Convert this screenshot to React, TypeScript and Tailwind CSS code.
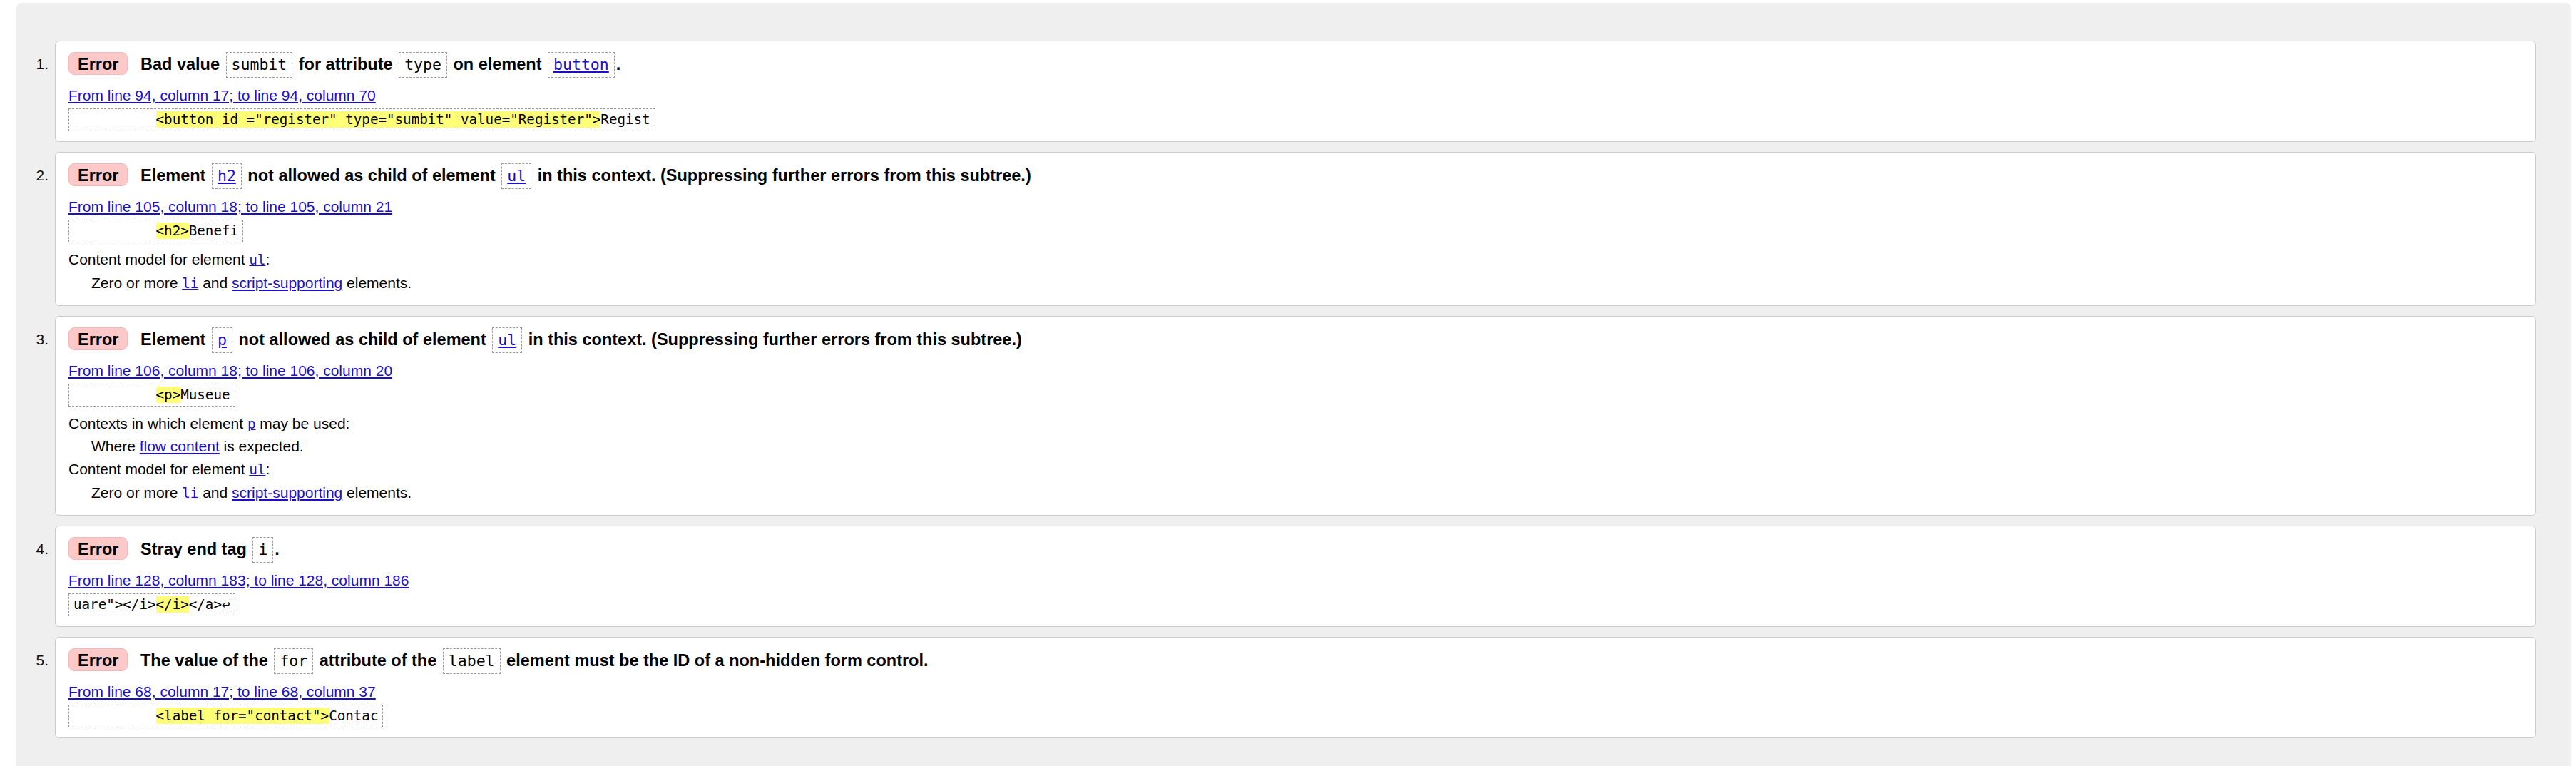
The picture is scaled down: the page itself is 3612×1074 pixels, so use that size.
import React from "react";

const MONO = "font-['DejaVu_Sans_Mono',monospace]";

function TCode({ children, link }: { children: React.ReactNode; link?: boolean }) {
  return (
    <span
      className={`inline-block border border-dashed border-[#9a9a9a] px-[7px] mx-[2px] leading-[34px] text-[21.5px] font-normal ${MONO}`}
    >
      {link ? <a className="text-[#1a0dcc] underline">{children}</a> : children}
    </span>
  );
}

function ICode({ children }: { children: React.ReactNode }) {
  return <a className={`text-[#1a0dcc] underline text-[19.2px] ${MONO}`}>{children}</a>;
}

function Lnk({ children }: { children: React.ReactNode }) {
  return <a className="text-[#1a0dcc] underline">{children}</a>;
}

function Extract({ pre, hl, post }: { pre: string; hl: string; post: React.ReactNode }) {
  return (
    <div className="mt-[5px] flex">
      <div
        className={`border border-dashed border-[#9a9a9a] px-[6px] leading-[30px] text-[19.2px] text-black whitespace-pre ${MONO}`}
      >
        {pre}
        <span className="bg-[#ffff77]">{hl}</span>
        {post}
      </div>
    </div>
  );
}

function Item({
  n,
  title,
  loc,
  extract,
  extra,
}: {
  n: number;
  title: React.ReactNode;
  loc: string;
  extract: React.ReactNode;
  extra?: React.ReactNode;
}) {
  return (
    <li className="flex items-start">
      <span className="w-[54px] shrink-0 pr-[9px] text-right mt-[17px] leading-[32px] text-[21px] text-[#111]">
        {n}.
      </span>
      <div className="flex-1 bg-white border border-[#cbcbcb] rounded-[6px] pl-[18px] pr-4 pt-[14px] pb-[14px]">
        <p className="h-[36px] leading-[36px] text-[23.5px] font-bold text-black whitespace-nowrap">
          <span className="inline-block h-[32px] leading-[32px] px-[12px] rounded-[8px] bg-[#fcc8c8] border border-[#f4baba] mr-[11px]">
            Error
          </span>{" "}
          {title}
        </p>
        <div className="mt-[12px] leading-[27px] text-[21px]">
          <Lnk>{loc}</Lnk>
        </div>
        {extract}
        {extra}
      </div>
    </li>
  );
}

function ContentModelUl() {
  return (
    <>
      <div className="leading-[31.75px] text-[21px] text-black">
        Content model for element <ICode>ul</ICode>:
      </div>
      <div className="leading-[31.75px] text-[21px] text-black ml-[32px]">
        Zero or more <ICode>li</ICode> and <Lnk>script-supporting</Lnk> elements.
      </div>
    </>
  );
}

export default function App() {
  return (
    <div className="min-h-screen bg-white pt-[4px] pl-[23px] pr-[7px] font-['Liberation_Sans',Arial,sans-serif]">
      <div className="bg-[#efefef] rounded-[8px] pt-[53px] pr-[49px] pb-[60px]">
        <ol className="flex flex-col gap-[14px]">
          <Item
            n={1}
            title={
              <>
                Bad value <TCode>sumbit</TCode> for attribute <TCode>type</TCode> on element{" "}
                <TCode link>button</TCode>.
              </>
            }
            loc="From line 94, column 17; to line 94, column 70"
            extract={
              <Extract
                pre={"          "}
                hl={'<button id ="register" type="sumbit" value="Register">'}
                post="Regist"
              />
            }
          />
          <Item
            n={2}
            title={
              <>
                Element <TCode link>h2</TCode> not allowed as child of element <TCode link>ul</TCode> in this
                context. (Suppressing further errors from this subtree.)
              </>
            }
            loc="From line 105, column 18; to line 105, column 21"
            extract={<Extract pre={"          "} hl="<h2>" post="Benefi" />}
            extra={
              <div className="mt-[8px]">
                <ContentModelUl />
              </div>
            }
          />
          <Item
            n={3}
            title={
              <>
                Element <TCode link>p</TCode> not allowed as child of element <TCode link>ul</TCode> in this
                context. (Suppressing further errors from this subtree.)
              </>
            }
            loc="From line 106, column 18; to line 106, column 20"
            extract={<Extract pre={"          "} hl="<p>" post="Museue" />}
            extra={
              <div className="mt-[8px]">
                <div className="leading-[31.75px] text-[21px] text-black">
                  Contexts in which element <ICode>p</ICode> may be used:
                </div>
                <div className="leading-[31.75px] text-[21px] text-black ml-[32px]">
                  Where <Lnk>flow content</Lnk> is expected.
                </div>
                <ContentModelUl />
              </div>
            }
          />
          <Item
            n={4}
            title={
              <>
                Stray end tag <TCode>i</TCode>.
              </>
            }
            loc="From line 128, column 183; to line 128, column 186"
            extract={
              <Extract
                pre={'uare"></i>'}
                hl="</i>"
                post={
                  <>
                    {"</a>"}
                    <span className="border-b border-dotted border-[#555]">↩</span>
                  </>
                }
              />
            }
          />
          <Item
            n={5}
            title={
              <>
                The value of the <TCode>for</TCode> attribute of the <TCode>label</TCode> element must be the ID
                of a non-hidden form control.
              </>
            }
            loc="From line 68, column 17; to line 68, column 37"
            extract={<Extract pre={"          "} hl={'<label for="contact">'} post="Contac" />}
          />
        </ol>
      </div>
    </div>
  );
}
